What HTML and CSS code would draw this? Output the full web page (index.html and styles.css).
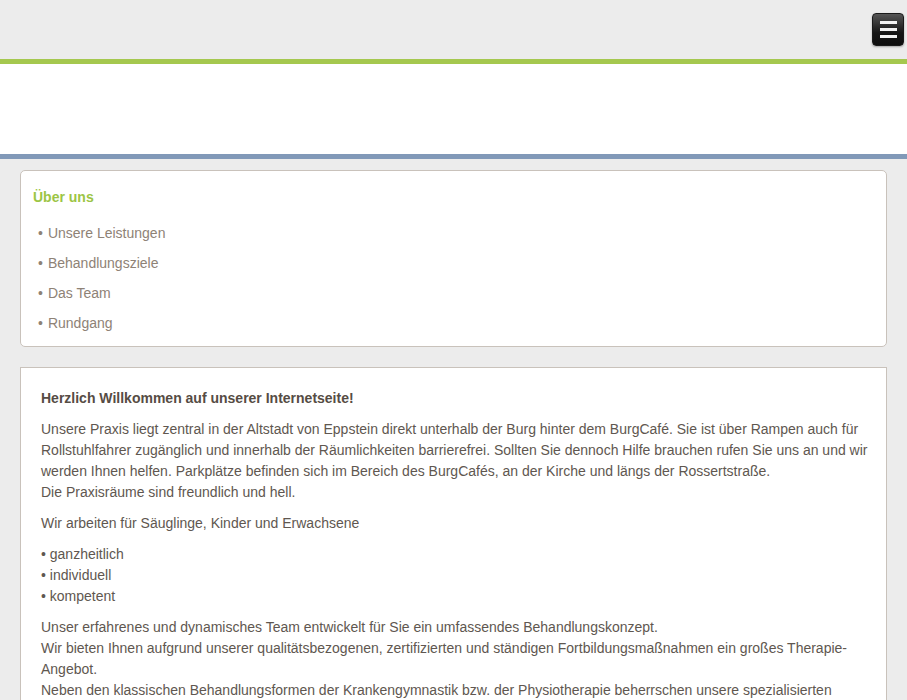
FILE: index.html
```html
<!DOCTYPE html>
<html lang="de">
<head>
  <meta charset="UTF-8" />
  <title>Praxis für Physiotherapie Eppstein</title>
  <meta name="viewport" content="width=device-width, initial-scale=1" />
  <link rel="stylesheet" href="styles.css">
</head>
<body>
  <header class="topbar">
    <button class="menu-btn" aria-label="Menü">
      <span></span><span></span><span></span>
    </button>
  </header>
  <div class="banner"></div>

  <main class="page">
    <nav class="box subnav">
      <h3>Über uns</h3>
      <ul>
        <li><a href="#">Unsere Leistungen</a></li>
        <li><a href="#">Behandlungsziele</a></li>
        <li><a href="#">Das Team</a></li>
        <li><a href="#">Rundgang</a></li>
      </ul>
    </nav>

    <section class="box content">
      <h2>Herzlich Willkommen auf unserer Internetseite!</h2>
      <p>Unsere Praxis liegt zentral in der Altstadt von Eppstein direkt unterhalb der Burg hinter dem BurgCafé. Sie ist über Rampen auch für Rollstuhlfahrer zugänglich und innerhalb der Räumlichkeiten barrierefrei. Sollten Sie dennoch Hilfe brauchen rufen Sie uns an und wir werden Ihnen helfen. Parkplätze befinden sich im Bereich des BurgCafés, an der Kirche und längs der Rossertstraße.<br />
      Die Praxisräume sind freundlich und hell.</p>
      <p>Wir arbeiten für Säuglinge, Kinder und Erwachsene</p>
      <p>• ganzheitlich<br />• individuell<br />• kompetent</p>
      <p>Unser erfahrenes und dynamisches Team entwickelt für Sie ein umfassendes Behandlungskonzept.<br />
      Wir bieten Ihnen aufgrund unserer qualitätsbezogenen, zertifizierten und ständigen Fortbildungsmaßnahmen ein großes Therapie-Angebot.<br />
      Neben den klassischen Behandlungsformen der Krankengymnastik bzw. der Physiotherapie beherrschen unsere spezialisierten Therapeuten eine Vielzahl weiterer Techniken.</p>
    </section>
  </main>
</body>
</html>
```

FILE: styles.css
```css
body {
  margin: 0;
  font-family: 'Liberation Sans', Arial, sans-serif;
  font-size: 14px;
  background: #ececec;
  color: #605750;
}
.topbar {
  height: 46px;
  background: #ececec;
  border-bottom: 5px solid #a5c84f;
  display: flex;
  justify-content: flex-end;
  align-items: flex-start;
  padding: 13px 3px 0 0;
}
.menu-btn {
  width: 32px;
  height: 33px;
  border: 1px solid #1a1a1a;
  border-radius: 4px;
  background: linear-gradient(#555555, #161616 60%, #0e0e0e);
  box-shadow: 0 1px 2px rgba(0, 0, 0, 0.3);
  display: flex;
  flex-direction: column;
  justify-content: center;
  align-items: center;
  gap: 4px;
  padding: 0;
  cursor: pointer;
}
.menu-btn span {
  display: block;
  width: 17px;
  height: 3px;
  background: #f2f2f2;
}
.banner {
  height: 90px;
  background: #ffffff;
  border-bottom: 5px solid #8199b8;
}
.page {
  padding: 11px 20px 20px;
}
.box {
  background: #ffffff;
  border: 1px solid #c9c2bb;
}
.subnav {
  border-radius: 5px;
  padding: 16px 12px 8px;
}
.subnav h3 {
  margin: 0;
  font-size: 14px;
  line-height: 20px;
  color: #9cc545;
}
.subnav ul {
  list-style: none;
  margin: 11px 0 0;
  padding: 0 0 0 5px;
}
.subnav li {
  line-height: 30px;
}
.subnav li::before {
  content: "•";
  margin-right: 5px;
  color: #8e8276;
}
.subnav a {
  color: #8e8276;
  text-decoration: none;
}
.content {
  margin-top: 20px;
  padding: 20px 15px 20px 20px;
  line-height: 21px;
}
.content h2 {
  margin: 0;
  font-size: 14px;
  line-height: 21px;
  color: #564c44;
}
.content p {
  margin: 10px 0 0;
}
```
